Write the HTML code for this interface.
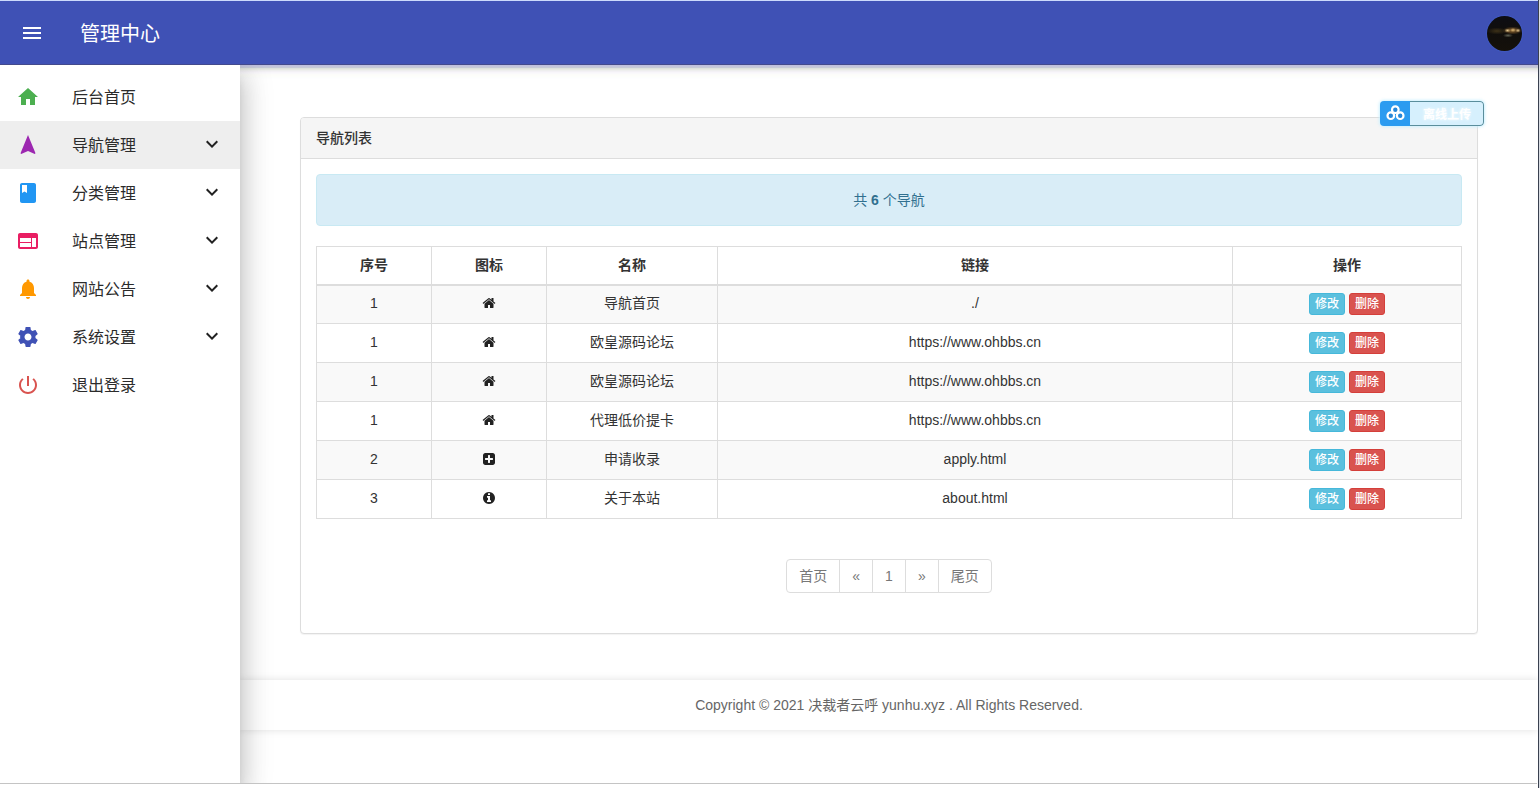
<!DOCTYPE html>
<html lang="zh-CN">
<head>
<meta charset="utf-8">
<title>管理中心</title>
<style>
*{box-sizing:border-box;}
html,body{margin:0;padding:0;}
body{width:1540px;height:788px;overflow:hidden;background:#fff;position:relative;
  font-family:"Liberation Sans","Noto Sans CJK SC",sans-serif;font-size:14px;line-height:20px;color:#333;}
#topline{position:absolute;left:0;top:0;width:1538px;height:1px;background:#ccdafc;}
#appbar{position:absolute;left:0;top:1px;width:1538px;height:64px;background:#3f51b5;color:#fff;z-index:30;border-bottom:1px solid #434a8c;}
#appshadow{position:absolute;left:0;top:65px;width:1538px;height:14px;z-index:10;background:linear-gradient(180deg,#bfc0dd 0.00%,#bfc0dd 7.14%,#c3c5da 7.14%,#c3c5da 14.29%,#c6cad6 14.29%,#c6cad6 21.43%,#dde1dc 21.43%,#dde1dc 28.57%,#e6e8e3 28.57%,#e6e8e3 35.71%,#eeeeee 35.71%,#eeeeee 42.86%,#f3f1f5 42.86%,#f3f1f5 50.00%,#f8f6fa 50.00%,#f8f6fa 57.14%,#faf9fb 57.14%,#faf9fb 64.29%,#fcfcfa 64.29%,#fcfcfa 71.43%,#fdfdfa 71.43%,#fdfdfa 78.57%,#fdfefb 78.57%,#fdfefb 85.71%,#fdfefd 85.71%,#fdfefd 92.86%,#fefeff 92.86%,#fefeff 100.00%);}
#appbar .menu{position:absolute;left:20px;top:20px;width:24px;height:24px;}
#appbar .title{position:absolute;left:80px;top:1px;line-height:64px;font-size:20px;font-weight:400;white-space:nowrap;}
#avatar{position:absolute;left:1487px;top:15px;width:35px;height:35px;border-radius:50%;overflow:hidden;box-shadow:0 0 2px rgba(70,110,220,.9);
  background:radial-gradient(ellipse 3px 2px at 20.500px 14.500px,rgba(235,205,145,.95),rgba(235,205,145,0) 100%),
  radial-gradient(ellipse 3px 2px at 26px 14px,rgba(225,190,125,.9),rgba(225,190,125,0) 100%),
  radial-gradient(ellipse 2.500px 2px at 31px 14.500px,rgba(235,205,150,.9),rgba(235,205,150,0) 100%),
  radial-gradient(ellipse 10px 4px at 25.500px 14.500px,rgba(150,110,55,.95),rgba(120,85,40,.6) 55%,rgba(100,70,30,0) 100%),
  radial-gradient(ellipse 10px 3.500px at 10px 15px,rgba(70,56,26,.85),rgba(60,48,22,0) 100%),
  radial-gradient(ellipse 5px 2px at 21px 19.500px,rgba(115,118,100,.8),rgba(115,118,100,0) 100%),
  linear-gradient(180deg,#0d0d14 0,#100e0c 45%,#15110a 100%);}
#rightline{position:absolute;left:1538px;top:0;width:2px;height:788px;background:linear-gradient(90deg,#3a4150 0,#3a4150 55%,#cfd4dc 55%,#e6e9ee 100%);z-index:60;}
#bottomline{position:absolute;left:0;top:783px;width:1537px;height:1px;background:#c4c4c4;z-index:50;}
#bottomwhite{position:absolute;left:0;top:784px;width:1540px;height:4px;background:#fff;z-index:49;}
#drawer{position:absolute;left:0;top:65px;width:240px;height:719px;background:#fff;z-index:20;
  box-shadow:0 8px 10px -5px rgba(0,0,0,.2),0 16px 24px 2px rgba(0,0,0,.14),0 6px 30px 5px rgba(0,0,0,.12);}
#drawer ul{list-style:none;margin:0;padding:8px 0;}
#drawer li{height:48px;position:relative;font-size:16px;line-height:48px;color:#2b2b2b;}
#drawer li.act{background:#eeeeee;}
#drawer li svg.ic{position:absolute;left:16px;top:12px;width:24px;height:24px;}
#drawer li span{position:absolute;left:72px;top:1px;white-space:nowrap;}
#drawer li svg.ar{position:absolute;left:200px;top:11px;width:24px;height:24px;}
#main{position:absolute;left:240px;top:65px;width:1298px;height:719px;background:#fff;}
.panel{position:absolute;left:60px;top:52px;width:1178px;height:517px;border:1px solid #ddd;border-radius:4px;background:#fff;
  box-shadow:0 1px 1px rgba(0,0,0,.05);}
.panel-heading{height:41px;padding:10px 15px;background:#f5f5f5;border-bottom:1px solid #ddd;border-radius:3px 3px 0 0;
  font-size:14px;color:#333;font-weight:500;}
.panel-body{padding:15px;}
.alert{height:52px;border:1px solid #c8e9f3;background:#d9edf7;color:#31708f;border-radius:4px;padding:15px;text-align:center;margin-bottom:20px;}
table{border-collapse:collapse;border-spacing:0;width:1145px;table-layout:fixed;margin:0 0 20px 0;}
th,td{border:1px solid #ddd;padding:0 8px;text-align:center;vertical-align:middle;line-height:20px;}
th{height:38px;}
td{height:39px;padding-bottom:2px;}
td:last-child{padding:0 8px;font-size:0;line-height:0;}
td .btn+.btn{margin-left:4px;}
th{font-weight:bold;border-bottom-width:2px;}
tbody tr:nth-child(odd){background:#f9f9f9;}
.btn{display:inline-block;font-weight:500;font-size:12px;line-height:18px;padding:1px 5px;border-radius:3px;color:#fff;border:1px solid transparent;vertical-align:top;}
.btn-info{background:#5bc0de;border-color:#46b8da;}
.btn-danger{background:#d9534f;border-color:#d43f3a;}
.pager{text-align:center;height:34px;margin:40px 0 20px;font-size:0;}
.pager a{display:inline-block;height:34px;padding:6px 12px;border:1px solid #ddd;margin-left:-1px;font-size:14px;line-height:20px;color:#777;background:#fff;}
.pager a:first-child{border-radius:4px 0 0 4px;margin-left:0;}
.pager a:last-child{border-radius:0 4px 4px 0;}
#footer{position:absolute;left:0;top:615px;width:1298px;height:50px;background:#fff;text-align:center;line-height:50px;color:#666;font-size:14px;
  box-shadow:0 0 8px rgba(0,0,0,.12);}
#bdbtn{position:absolute;left:1140px;top:36px;width:104px;height:25px;border-radius:4px;background:#d6f0fd;overflow:hidden;box-shadow:0 0 3px 1px rgba(200,240,255,.9);}
#bdbtn:after{content:"";position:absolute;left:0;top:0;right:0;bottom:0;border:1px solid #5a8e9c;border-left:0;border-radius:0 4px 4px 0;margin-left:30px;}
#bdbtn .l{position:absolute;left:0;top:0;width:30px;height:25px;background:#2b9bf0;}
#bdbtn .l svg{position:absolute;left:0;top:0;width:30px;height:25px;}
#bdbtn .t{position:absolute;left:30px;top:0;width:74px;text-align:center;font-size:12px;line-height:28px;color:#fff;font-weight:bold;text-shadow:0 0 2px #eaf8ff,0 0 3px #f4fbff;}
td svg{width:14px;height:14px;display:block;margin:0 auto;position:relative;top:0;}
</style>
</head>
<body>
<div id="topline"></div>
<div id="appbar">
  <svg class="menu" viewBox="0 0 24 24"><path fill="#fff" d="M3 18h18v-2H3v2zm0-5h18v-2H3v2zm0-7v2h18V6H3z"/></svg>
  <div class="title">管理中心</div>
  <div id="avatar"></div>
</div>
<div id="appshadow"></div>
<div id="drawer">
  <ul>
    <li><svg class="ic" viewBox="0 0 24 24"><path fill="#4caf50" d="M10 20v-6h4v6h5v-8h3L12 3 2 12h3v8z"/></svg><span>后台首页</span></li>
    <li class="act"><svg class="ic" viewBox="0 0 24 24"><path fill="#9c27b0" d="M12 2L4.5 20.29l.71.71L12 18l6.790 3 .71-.71z"/></svg><span>导航管理</span><svg class="ar" viewBox="0 0 24 24"><path fill="#212121" d="M16.59 8.59L12 13.17 7.41 8.590 6 10l6 6 6-6z"/></svg></li>
    <li><svg class="ic" viewBox="0 0 24 24"><path fill="#2196f3" d="M18 2H6c-1.100 0-2 .9-2 2v16c0 1.100.9 2 2 2h12c1.100 0 2-.9 2-2V4c0-1.100-.9-2-2-2zM6 4h5v8l-2.500-1.500L6 12V4z"/></svg><span>分类管理</span><svg class="ar" viewBox="0 0 24 24"><path fill="#212121" d="M16.59 8.59L12 13.17 7.41 8.590 6 10l6 6 6-6z"/></svg></li>
    <li><svg class="ic" viewBox="0 0 24 24"><path fill="#e91e63" d="M20 4H4c-1.100 0-1.990.9-1.990 2L2 18c0 1.100.9 2 2 2h16c1.100 0 2-.9 2-2V6c0-1.100-.9-2-2-2zm-5 14H4v-4h11v4zm0-5H4V9h11v4zm5 5h-4V9h4v9z"/></svg><span>站点管理</span><svg class="ar" viewBox="0 0 24 24"><path fill="#212121" d="M16.59 8.59L12 13.17 7.41 8.590 6 10l6 6 6-6z"/></svg></li>
    <li><svg class="ic" viewBox="0 0 24 24"><path fill="#ff9800" d="M12 22c1.100 0 2-.9 2-2h-4c0 1.100.89 2 2 2zm6-6v-5c0-3.070-1.640-5.640-4.500-6.320V4c0-.83-.67-1.500-1.500-1.500s-1.500.67-1.500 1.500v.68C7.630 5.360 6 7.920 6 11v5l-2 2v1h16v-1l-2-2z"/></svg><span>网站公告</span><svg class="ar" viewBox="0 0 24 24"><path fill="#212121" d="M16.59 8.59L12 13.17 7.41 8.590 6 10l6 6 6-6z"/></svg></li>
    <li><svg class="ic" viewBox="0 0 24 24"><path fill="#3f51b5" d="M19.430 12.980c.04-.32.070-.64.070-.98s-.03-.66-.07-.98l2.110-1.650c.19-.15.240-.42.120-.64l-2-3.460c-.12-.22-.39-.3-.61-.22l-2.490 1c-.52-.4-1.080-.73-1.690-.98l-.38-2.650C14.460 2.180 14.250 2 14 2h-4c-.25 0-.46.180-.49.420l-.38 2.650c-.61.250-1.170.59-1.690.98l-2.490-1c-.23-.09-.49 0-.61.220l-2 3.460c-.13.220-.07.490.12.640l2.110 1.650c-.4.320-.7.650-.7.980s.3.660.7.980l-2.110 1.650c-.19.150-.24.420-.12.640l2 3.460c.12.220.39.300.61.220l2.490-1c.52.400 1.080.73 1.690.98l.38 2.650c.3.240.24.420.49.420h4c.25 0 .46-.18.490-.42l.38-2.650c.61-.25 1.170-.59 1.690-.98l2.490 1c.23.090.49 0 .61-.22l2-3.460c.12-.22.070-.49-.12-.64l-2.110-1.650zM12 15.500c-1.930 0-3.500-1.570-3.500-3.500s1.570-3.500 3.500-3.500 3.500 1.570 3.500 3.500-1.570 3.500-3.500 3.500z"/></svg><span>系统设置</span><svg class="ar" viewBox="0 0 24 24"><path fill="#212121" d="M16.59 8.59L12 13.17 7.41 8.590 6 10l6 6 6-6z"/></svg></li>
    <li><svg class="ic" viewBox="0 0 24 24"><path fill="#d9534f" d="M13 3h-2v10h2V3zm4.830 2.170l-1.420 1.420C17.990 7.860 19 9.810 19 12c0 3.870-3.130 7-7 7s-7-3.130-7-7c0-2.190 1.010-4.140 2.580-5.420L6.170 5.170C4.230 6.820 3 9.260 3 12c0 4.970 4.030 9 9 9s9-4.030 9-9c0-2.740-1.230-5.180-3.170-6.830z"/></svg><span>退出登录</span></li>
  </ul>
</div>
<div id="main">
  <div class="panel">
    <div class="panel-heading">导航列表</div>
    <div class="panel-body">
      <div class="alert">共 <b>6</b> 个导航</div>
      <table>
        <colgroup><col style="width:115px"><col style="width:115px"><col style="width:171px"><col style="width:515px"><col style="width:229px"></colgroup>
        <thead><tr><th>序号</th><th>图标</th><th>名称</th><th>链接</th><th>操作</th></tr></thead>
        <tbody>
          <tr><td>1</td><td><svg viewBox="0 0 1792 1792"><path fill="#222" d="M1472 992v480q0 26-19 45t-45 19h-384v-384h-256v384h-384q-26 0-45-19t-19-45v-480q0-1 .5-3t.5-3l575-474 575 474q1 2 1 6zm223-69l-62 74q-8 9-21 11h-3q-13 0-21-7l-692-577-692 577q-12 8-24 7-13-2-21-11l-62-74q-8-10-7-23.500t11-21.500l719-599q32-26 76-26t76 26l244 204v-195q0-14 9-23t23-9h192q14 0 23 9t9 23v408l219 182q10 8 11 21.500t-7 23.500z"/></svg></td><td>导航首页</td><td>./</td><td><a class="btn btn-info">修改</a><a class="btn btn-danger">删除</a></td></tr>
          <tr><td>1</td><td><svg viewBox="0 0 1792 1792"><path fill="#222" d="M1472 992v480q0 26-19 45t-45 19h-384v-384h-256v384h-384q-26 0-45-19t-19-45v-480q0-1 .5-3t.5-3l575-474 575 474q1 2 1 6zm223-69l-62 74q-8 9-21 11h-3q-13 0-21-7l-692-577-692 577q-12 8-24 7-13-2-21-11l-62-74q-8-10-7-23.500t11-21.500l719-599q32-26 76-26t76 26l244 204v-195q0-14 9-23t23-9h192q14 0 23 9t9 23v408l219 182q10 8 11 21.500t-7 23.500z"/></svg></td><td>欧皇源码论坛</td><td>https://www.ohbbs.cn</td><td><a class="btn btn-info">修改</a><a class="btn btn-danger">删除</a></td></tr>
          <tr><td>1</td><td><svg viewBox="0 0 1792 1792"><path fill="#222" d="M1472 992v480q0 26-19 45t-45 19h-384v-384h-256v384h-384q-26 0-45-19t-19-45v-480q0-1 .5-3t.5-3l575-474 575 474q1 2 1 6zm223-69l-62 74q-8 9-21 11h-3q-13 0-21-7l-692-577-692 577q-12 8-24 7-13-2-21-11l-62-74q-8-10-7-23.500t11-21.500l719-599q32-26 76-26t76 26l244 204v-195q0-14 9-23t23-9h192q14 0 23 9t9 23v408l219 182q10 8 11 21.500t-7 23.500z"/></svg></td><td>欧皇源码论坛</td><td>https://www.ohbbs.cn</td><td><a class="btn btn-info">修改</a><a class="btn btn-danger">删除</a></td></tr>
          <tr><td>1</td><td><svg viewBox="0 0 1792 1792"><path fill="#222" d="M1472 992v480q0 26-19 45t-45 19h-384v-384h-256v384h-384q-26 0-45-19t-19-45v-480q0-1 .5-3t.5-3l575-474 575 474q1 2 1 6zm223-69l-62 74q-8 9-21 11h-3q-13 0-21-7l-692-577-692 577q-12 8-24 7-13-2-21-11l-62-74q-8-10-7-23.500t11-21.500l719-599q32-26 76-26t76 26l244 204v-195q0-14 9-23t23-9h192q14 0 23 9t9 23v408l219 182q10 8 11 21.500t-7 23.500z"/></svg></td><td>代理低价提卡</td><td>https://www.ohbbs.cn</td><td><a class="btn btn-info">修改</a><a class="btn btn-danger">删除</a></td></tr>
          <tr><td>2</td><td><svg viewBox="0 0 1792 1792"><path fill="#222" d="M1408 960v-128q0-26-19-45t-45-19h-320v-320q0-26-19-45t-45-19h-128q-26 0-45 19t-19 45v320h-320q-26 0-45 19t-19 45v128q0 26 19 45t45 19h320v320q0 26 19 45t45 19h128q26 0 45-19t19-45v-320h320q26 0 45-19t19-45zm256-544v960q0 119-84.500 203.500t-203.500 84.500h-960q-119 0-203.500-84.500t-84.500-203.500v-960q0-119 84.500-203.500t203.500-84.500h960q119 0 203.500 84.500t84.500 203.500z"/></svg></td><td>申请收录</td><td>apply.html</td><td><a class="btn btn-info">修改</a><a class="btn btn-danger">删除</a></td></tr>
          <tr><td>3</td><td><svg viewBox="0 0 1792 1792"><path fill="#222" d="M1152 1376v-160q0-14-9-23t-23-9h-96v-512q0-14-9-23t-23-9h-320q-14 0-23 9t-9 23v160q0 14 9 23t23 9h96v320h-96q-14 0-23 9t-9 23v160q0 14 9 23t23 9h448q14 0 23-9t9-23zm-128-896v-160q0-14-9-23t-23-9h-192q-14 0-23 9t-9 23v160q0 14 9 23t23 9h192q14 0 23-9t9-23zm640 416q0 209-103 385.500t-279.500 279.500-385.500 103-385.500-103-279.500-279.500-103-385.500 103-385.500 279.500-279.500 385.500-103 385.500 103 279.500 279.500 103 385.500z"/></svg></td><td>关于本站</td><td>about.html</td><td><a class="btn btn-info">修改</a><a class="btn btn-danger">删除</a></td></tr>
        </tbody>
      </table>
      <div class="pager"><a>首页</a><a>«</a><a>1</a><a>»</a><a>尾页</a></div>
    </div>
  </div>
  <div id="bdbtn"><div class="l"><svg viewBox="0 0 30 25"><g fill="#2787d8" stroke="#fff" stroke-width="2.200"><circle cx="15.300" cy="8.700" r="3.300"/><circle cx="10.800" cy="14.700" r="3.300"/><circle cx="20.200" cy="14.700" r="3.300"/></g></svg></div><div class="t">离线上传</div></div>
  <div id="footer">Copyright © 2021 决裁者云呼 yunhu.xyz . All Rights Reserved.</div>
</div>
<div id="rightline"></div>
<div id="bottomline"></div>
<div id="bottomwhite"></div>
</body>
</html>
